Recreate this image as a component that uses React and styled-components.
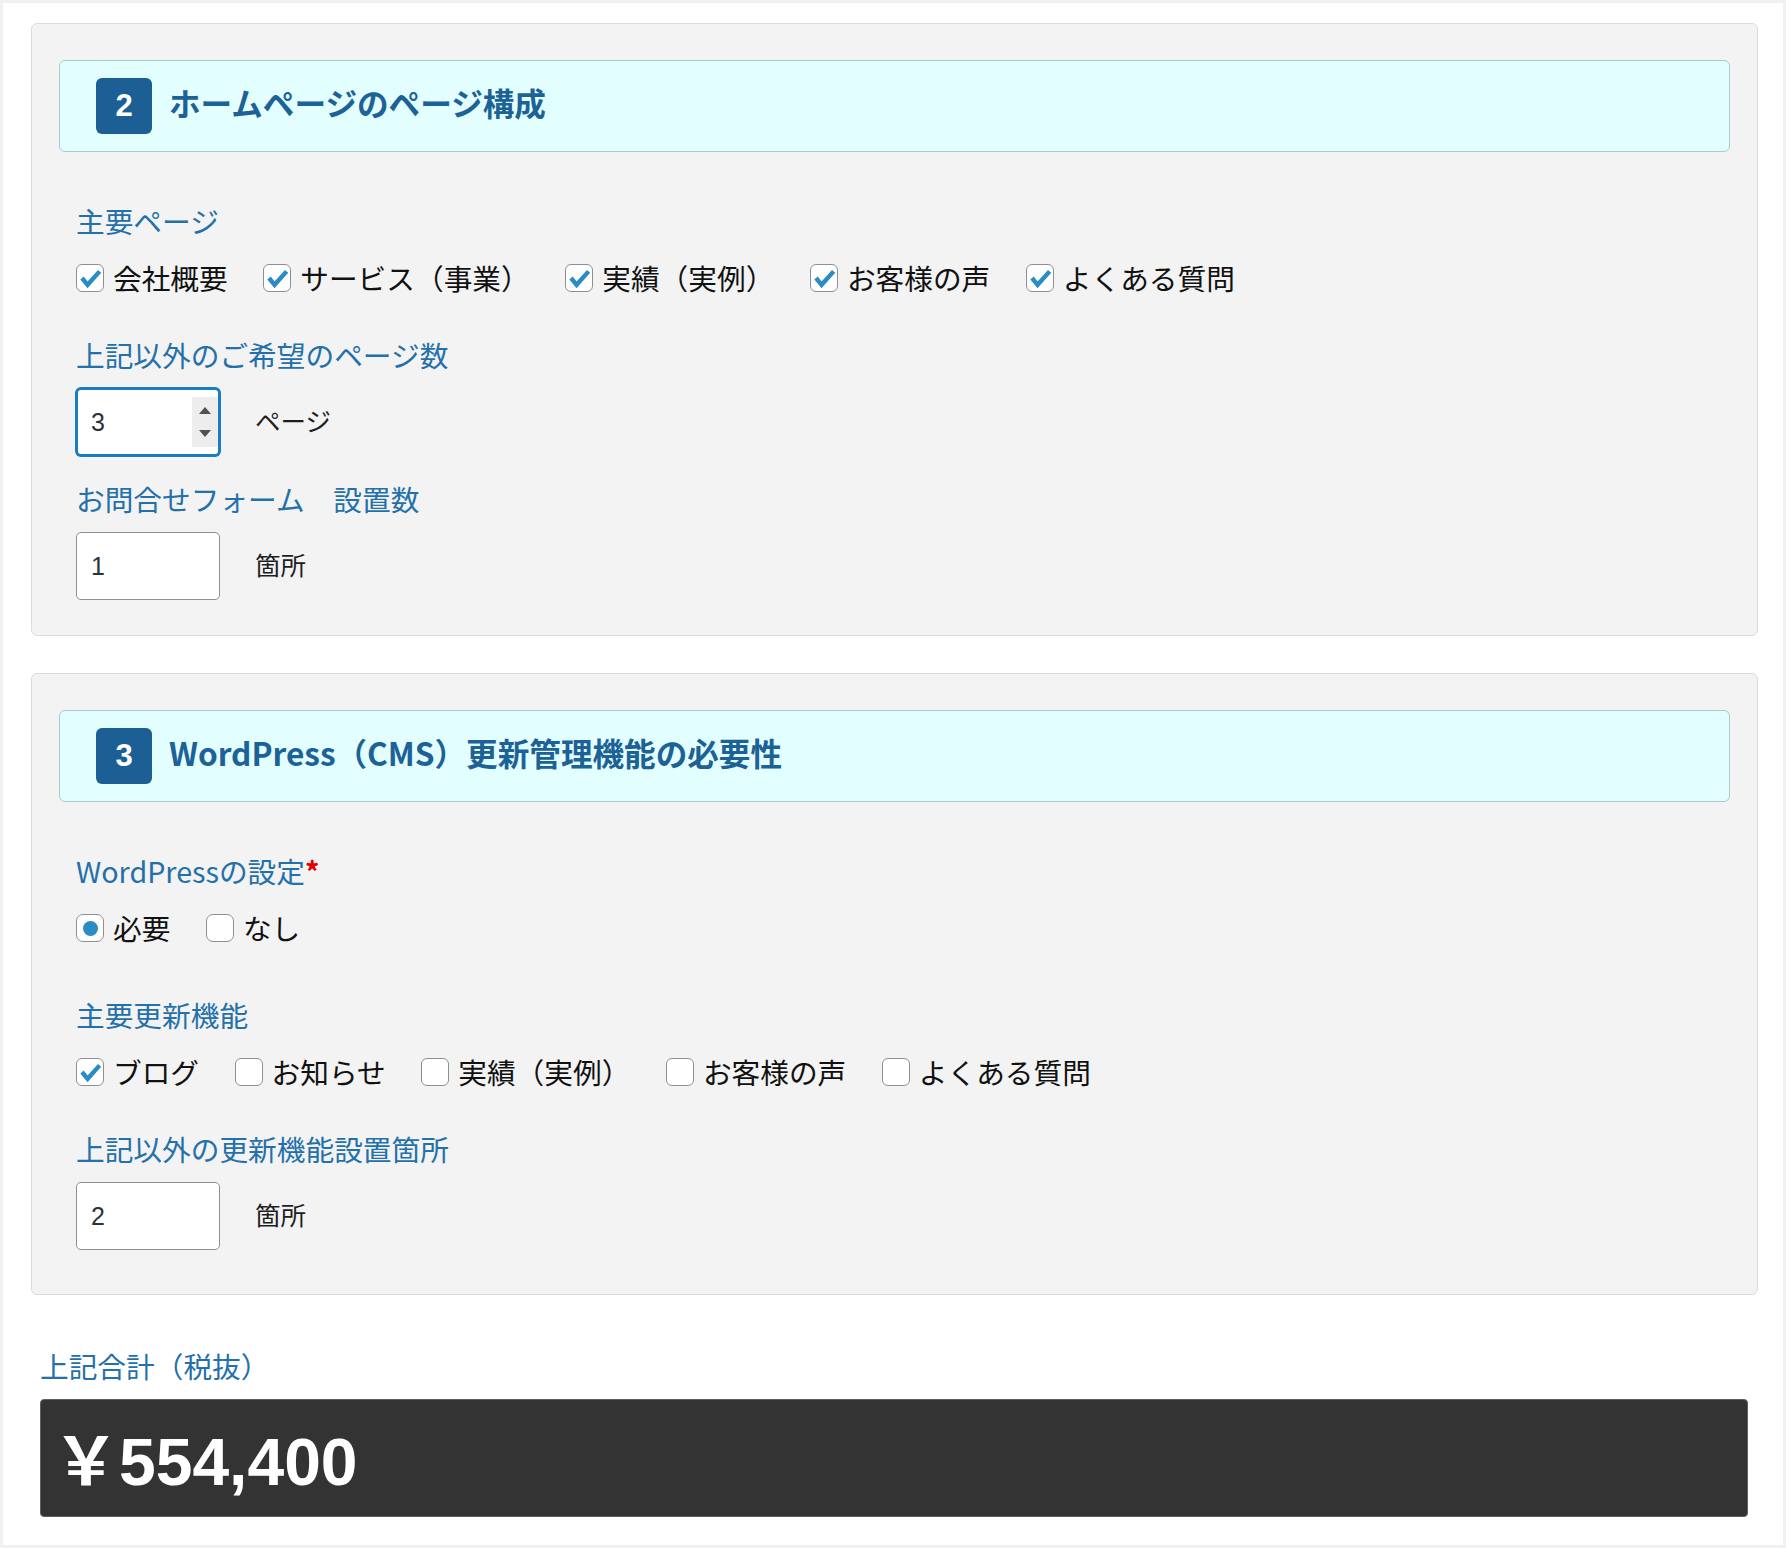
import React from 'react'
import styled, { createGlobalStyle } from 'styled-components'

const GlobalStyle = createGlobalStyle`
  html, body {
    margin: 0;
    padding: 0;
  }
  body {
    background: #f0f0f0;
    padding: 3px;
    font-family: "Noto Sans CJK JP", "Noto Sans", sans-serif;
  }
`

const mainPages = [
  { label: '会社概要', checked: true },
  { label: 'サービス（事業）', checked: true },
  { label: '実績（実例）', checked: true },
  { label: 'お客様の声', checked: true },
  { label: 'よくある質問', checked: true },
]

const updateFeatures = [
  { label: 'ブログ', checked: true },
  { label: 'お知らせ', checked: false },
  { label: '実績（実例）', checked: false },
  { label: 'お客様の声', checked: false },
  { label: 'よくある質問', checked: false },
]

function CheckMark() {
  return (
    <svg width="28" height="28" viewBox="0 0 28 28">
      <path d="M6 14 L11.6 20.8 L23.6 7.4" fill="none" stroke="#2a8cc3" strokeWidth="4.4" strokeLinejoin="miter" />
    </svg>
  )
}

function Option({ label, checked, radio }) {
  return (
    <OptionItem>
      <Box $radio={radio}>
        {checked && (radio ? <Dot /> : <CheckMark />)}
      </Box>
      <OptionText>{label}</OptionText>
    </OptionItem>
  )
}

function NumberInput({ value, focused }) {
  return (
    <NumberBox $focused={focused}>
      <span>{value}</span>
      {focused && (
        <Spinner>
          <Arrow $up />
          <Arrow />
        </Spinner>
      )}
    </NumberBox>
  )
}

function App() {
  return (
    <>
      <GlobalStyle />
      <Page>
        <Panel>
          <SectionHead>
            <Badge>2</Badge>
            <SectionTitle>ホームページのページ構成</SectionTitle>
          </SectionHead>
          <Body>
            <Field $gap={35}>
              <FieldLabel>主要ページ</FieldLabel>
              <OptionRow>
                {mainPages.map(o => <Option key={o.label} {...o} />)}
              </OptionRow>
            </Field>
            <Field $gap={22}>
              <FieldLabel>上記以外のご希望のページ数</FieldLabel>
              <InputRow>
                <NumberInput value="3" focused />
                <Unit>ページ</Unit>
              </InputRow>
            </Field>
            <Field>
              <FieldLabel>お問合せフォーム　設置数</FieldLabel>
              <InputRow>
                <NumberInput value="1" />
                <Unit>箇所</Unit>
              </InputRow>
            </Field>
          </Body>
        </Panel>

        <Panel $bottom={44}>
          <SectionHead>
            <Badge>3</Badge>
            <SectionTitle>WordPress（CMS）更新管理機能の必要性</SectionTitle>
          </SectionHead>
          <Body>
            <Field $gap={45}>
              <FieldLabel>WordPressの設定<Req>*</Req></FieldLabel>
              <OptionRow>
                <Option label="必要" checked radio />
                <Option label="なし" radio />
              </OptionRow>
            </Field>
            <Field $gap={35}>
              <FieldLabel>主要更新機能</FieldLabel>
              <OptionRow>
                {updateFeatures.map(o => <Option key={o.label} {...o} />)}
              </OptionRow>
            </Field>
            <Field>
              <FieldLabel>上記以外の更新機能設置箇所</FieldLabel>
              <InputRow>
                <NumberInput value="2" />
                <Unit>箇所</Unit>
              </InputRow>
            </Field>
          </Body>
        </Panel>

        <Total>
          <FieldLabel>上記合計（税抜）</FieldLabel>
          <TotalBox>￥554,400</TotalBox>
        </Total>
      </Page>
    </>
  )
}

export default App

const Page = styled.div`
  background: #fff;
  min-height: 1542px;
  box-sizing: border-box;
  padding: 20px 25px 27px 28px;
`

const Panel = styled.section`
  background: #f3f3f3;
  border: 1px solid #dcdcdc;
  border-radius: 6px;
  padding: 36px 27px ${p => p.$bottom || 35}px;

  & + & {
    margin-top: 37px;
  }
`

const SectionHead = styled.header`
  display: flex;
  align-items: center;
  gap: 17px;
  height: 92px;
  box-sizing: border-box;
  padding-left: 36px;
  background: #e3fefe;
  border: 1px solid #a8cacb;
  border-radius: 6px;
  margin-bottom: 48px;
`

const Badge = styled.span`
  flex: none;
  width: 56px;
  height: 56px;
  border-radius: 6px;
  background: #1b5f94;
  color: #fff;
  display: flex;
  align-items: center;
  justify-content: center;
  font: 700 31px "Liberation Sans", Arial, sans-serif;
`

const SectionTitle = styled.h2`
  margin: 0 0 6px;
  font-size: 31.6px;
  font-weight: 700;
  color: #1c6297;
  line-height: 1;
`

const Body = styled.div`
  padding-left: 17px;
`

const Field = styled.div`
  margin-bottom: ${p => p.$gap || 0}px;
`

const FieldLabel = styled.div`
  font-size: 28.7px;
  line-height: 42px;
  color: #2470aa;
  margin-bottom: 12px;
`

const Req = styled.span`
  color: #e00000;
  font-weight: 700;
`

const OptionRow = styled.div`
  display: flex;
  align-items: center;
  height: 42px;
  padding-top: 3px;
`

const OptionItem = styled.label`
  display: flex;
  align-items: center;
  margin-right: 35.5px;
`

const Box = styled.span`
  flex: none;
  width: 28px;
  height: 28px;
  box-sizing: border-box;
  border: 1px solid #8c8f94;
  border-radius: ${p => (p.$radio ? 7 : 6)}px;
  background: #fff;
  display: flex;
  align-items: center;
  justify-content: center;
  position: relative;

  svg {
    position: absolute;
    left: -1px;
    top: -1px;
  }
`

const Dot = styled.span`
  width: 15px;
  height: 15px;
  border-radius: 50%;
  background: #2a8cc4;
`

const OptionText = styled.span`
  margin-left: 9px;
  font-size: 28.7px;
  line-height: 42px;
  color: #111;
`

const InputRow = styled.div`
  display: flex;
  align-items: center;
  gap: 35px;
`

const NumberBox = styled.div`
  width: 144px;
  height: 68px;
  box-sizing: border-box;
  display: flex;
  align-items: center;
  padding: 0 ${p => (p.$focused ? 0 : 1)}px 0 ${p => (p.$focused ? 13 : 14)}px;
  background: #fff;
  border: ${p => (p.$focused ? '2px solid #1a7cc1' : '1px solid #8c8f94')};
  border-radius: 5px;
  box-shadow: ${p => (p.$focused ? '0 0 0 1px #1a7cc1' : 'none')};
  font: 25px "Liberation Sans", Arial, sans-serif;
  color: #2c3338;
`

const Spinner = styled.span`
  margin-left: auto;
  width: 26px;
  height: 50px;
  background: #ededed;
  display: flex;
  flex-direction: column;
  align-items: center;
  justify-content: center;
  gap: 16px;
`

const Arrow = styled.span`
  width: 0;
  height: 0;
  border-left: 6.5px solid transparent;
  border-right: 6.5px solid transparent;
  ${p => (p.$up ? 'border-bottom: 7px solid #505050;' : 'border-top: 7px solid #505050;')}
`

const Unit = styled.span`
  font-size: 25.5px;
  color: #1e1e1e;
  margin-bottom: 6px;
`

const Total = styled.div`
  margin: 50px 10px 0 9px;
`

const TotalBox = styled.div`
  height: 118px;
  box-sizing: border-box;
  background: #333;
  border: 1px solid #5a606b;
  border-radius: 4px;
  display: flex;
  align-items: center;
  padding: 0 0 5px 12px;
  color: #fff;
  font: 700 66px "Liberation Sans", "Noto Sans CJK JP", Arial, sans-serif;
`
